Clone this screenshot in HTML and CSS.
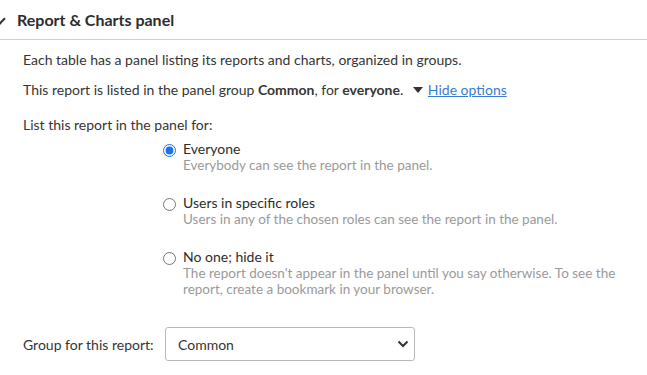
FILE: index.html
```html
<!DOCTYPE html>
<html lang="en">
<head>
    <meta charset="UTF-8">
    <title>Report &amp; Charts panel</title>
    <link rel="stylesheet" href="styles.css">
</head>
<body>
    <div class="section">
        <div class="section-header">
            <span class="caret"></span>
            <h2>Report &amp; Charts panel</h2>
        </div>

        <div class="section-body">
            <p class="intro">Each table has a panel listing its reports and charts, organized in groups.</p>
            <p class="summary">
                This report is listed in the panel group <b>Common</b>, for <b>everyone</b>.
                <span class="toggle"><span class="toggle-arrow"></span><a href="#">Hide options</a></span>
            </p>

            <p class="list-label">List this report in the panel for:</p>

            <div class="options">
                <label class="option">
                    <input type="radio" name="visibility" checked>
                    <span class="option-text">
                        <span class="option-title">Everyone</span>
                        <span class="option-desc">Everybody can see the report in the panel.</span>
                    </span>
                </label>
                <label class="option">
                    <input type="radio" name="visibility">
                    <span class="option-text">
                        <span class="option-title">Users in specific roles</span>
                        <span class="option-desc">Users in any of the chosen roles can see the report in the panel.</span>
                    </span>
                </label>
                <label class="option">
                    <input type="radio" name="visibility">
                    <span class="option-text">
                        <span class="option-title">No one; hide it</span>
                        <span class="option-desc">The report doesn't appear in the panel until you say otherwise. To see the report, create a bookmark in your browser.</span>
                    </span>
                </label>
            </div>

            <div class="group-row">
                <span class="group-label">Group for this report:</span>
                <div class="select">
                    <span>Common</span>
                    <svg width="12" height="8" viewBox="0 0 12 8"><path d="M1.5 1.5 L6 6 L10.5 1.5" fill="none" stroke="#333" stroke-width="2"/></svg>
                </div>
            </div>
        </div>
    </div>
</body>
</html>
```

FILE: styles.css
```css
body {
    margin: 0;
    font-family: Lato, "Open Sans", sans-serif;
    font-size: 14px;
    color: #353535;
    background-color: white;
}
.section-header {
    display: flex;
    align-items: center;
    height: 39px;
    border-bottom: 1px solid #cfcfcf;
    padding-left: 17px;
    position: relative;
}
.caret {
    position: absolute;
    left: -4px;
    top: 15px;
    width: 6px;
    height: 6px;
    border-right: 2px solid #333;
    border-bottom: 2px solid #333;
    transform: rotate(45deg);
}
h2 {
    margin: 0;
    font-size: 16px;
    font-weight: bold;
    color: #2d2d2d;
    padding-bottom: 1px;
}
.section-body {
    padding: 10px 23px 0 23px;
}
p {
    margin: 0;
    line-height: 20px;
}
.intro {
    margin-bottom: 10px;
}
.summary b {
    font-weight: bold;
}
.toggle {
    margin-left: 6px;
}
.toggle-arrow {
    display: inline-block;
    width: 0;
    height: 0;
    border-left: 5px solid transparent;
    border-right: 5px solid transparent;
    border-top: 6px solid #333;
    margin-right: 5px;
    vertical-align: 2px;
}
.toggle a {
    color: #3a7bd5;
}
.list-label {
    margin-top: 15px;
}
.options {
    padding-left: 140px;
    margin-top: 5px;
}
.option {
    display: flex;
    align-items: flex-start;
    margin-bottom: 21px;
}
.option input {
    width: 13px;
    height: 13px;
    margin: 4px 7px 0 0;
    accent-color: #1a73e8;
}
.option-text {
    display: flex;
    flex-direction: column;
}
.option-title {
    line-height: 17px;
    color: #2d2d2d;
}
.option-desc {
    color: #9a9a9a;
    line-height: 16px;
    font-size: 13.5px;
}
.group-row {
    display: flex;
    align-items: center;
    margin-top: 30px;
}
.group-label {
    width: 142px;
}
.select {
    display: flex;
    align-items: center;
    justify-content: space-between;
    width: 231px;
    height: 32px;
    padding: 0 5px 0 12px;
    border: 1px solid #b9b9b9;
    border-radius: 3px;
}
```
